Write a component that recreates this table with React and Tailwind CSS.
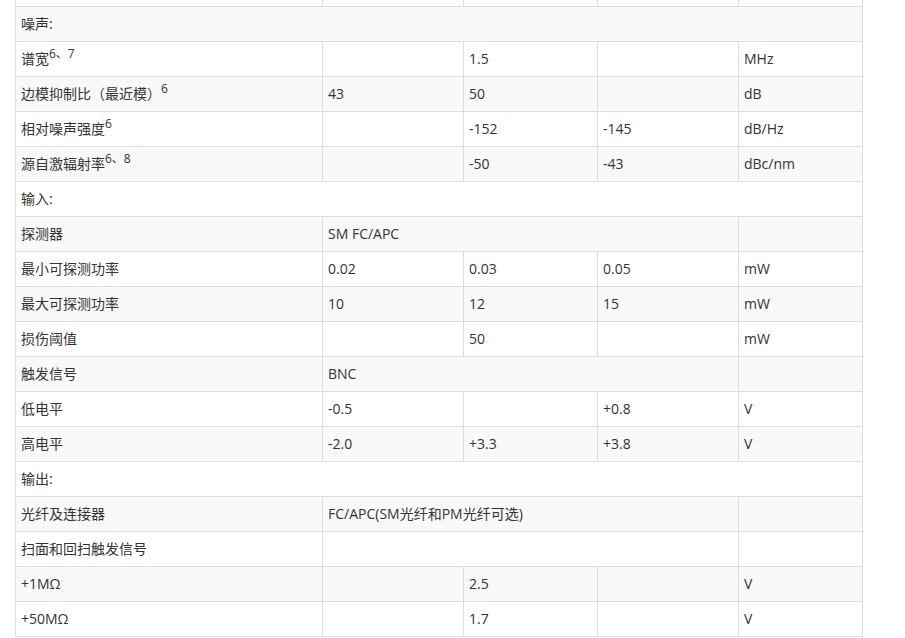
import React from 'react';

const rows = [
  { group: '噪声:' },
  { cells: [['谱宽', '6、7'], '', '1.5', '', 'MHz'] },
  { cells: [['边模抑制比（最近模）', '6'], '43', '50', '', 'dB'] },
  { cells: [['相对噪声强度', '6'], '', '-152', '-145', 'dB/Hz'] },
  { cells: [['源自激辐射率', '6、8'], '', '-50', '-43', 'dBc/nm'] },
  { group: '输入:' },
  { label: '探测器', span: 'SM FC/APC' },
  { cells: ['最小可探测功率', '0.02', '0.03', '0.05', 'mW'] },
  { cells: ['最大可探测功率', '10', '12', '15', 'mW'] },
  { cells: ['损伤阈值', '', '50', '', 'mW'] },
  { label: '触发信号', span: 'BNC' },
  { cells: ['低电平', '-0.5', '', '+0.8', 'V'] },
  { cells: ['高电平', '-2.0', '+3.3', '+3.8', 'V'] },
  { group: '输出:' },
  { label: '光纤及连接器', span: 'FC/APC(SM光纤和PM光纤可选)' },
  { label: '扫面和回扫触发信号', span: '' },
  { cells: ['+1MΩ', '', '2.5', '', 'V'] },
  { cells: ['+50MΩ', '', '1.7', '', 'V'] },
];

const td = 'border border-[#dddddd] px-[5px] h-[35px] align-middle whitespace-nowrap';

function Label({ v }) {
  if (Array.isArray(v)) {
    return (
      <>
        {v[0]}
        <sup className="text-[12px]">{v[1]}</sup>
      </>
    );
  }
  return v;
}

export default function App() {
  return (
    <div className="bg-white w-[905px] h-[638px] overflow-hidden">
      <table
        className="ml-[15px] w-[847px] table-fixed border-collapse text-[14px] text-[#333333]"
        style={{ fontFamily: '"Open Sans", "Noto Sans CJK SC", sans-serif' }}
      >
        <colgroup>
          <col className="w-[307px]" />
          <col className="w-[141px]" />
          <col className="w-[134px]" />
          <col className="w-[141px]" />
          <col className="w-[124px]" />
        </colgroup>
        <tbody>
          <tr className="h-[6px]">
            {[0, 1, 2, 3, 4].map((i) => (
              <td key={i} className="border border-t-0 border-[#dddddd] p-0 h-[6px]" />
            ))}
          </tr>
          {rows.map((r, i) => {
            const bg = i % 2 === 0 ? 'bg-[#f9f9f9]' : 'bg-white';
            if (r.group) {
              return (
                <tr key={i} className={bg}>
                  <td colSpan={5} className={td}>{r.group}</td>
                </tr>
              );
            }
            if (r.label) {
              return (
                <tr key={i} className={bg}>
                  <td className={td}>{r.label}</td>
                  <td colSpan={3} className={td}>{r.span}</td>
                  <td className={td} />
                </tr>
              );
            }
            return (
              <tr key={i} className={bg}>
                {r.cells.map((c, j) => (
                  <td key={j} className={td}>
                    <Label v={c} />
                  </td>
                ))}
              </tr>
            );
          })}
        </tbody>
      </table>
    </div>
  );
}
